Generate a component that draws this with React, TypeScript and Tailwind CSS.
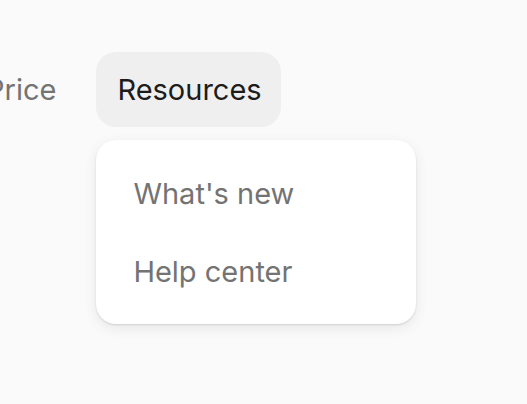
export default function App() {
  const items = ["What's new", 'Help center'];

  return (
    <div
      className="min-h-screen bg-[#fafafa] overflow-hidden"
      style={{ fontFamily: 'Inter, "Noto Sans", sans-serif' }}
    >
      <nav className="flex items-start pt-[52px] -ml-[35px]">
        <button className="h-[75px] px-[21px] pt-[1px] rounded-[20px] text-[29px] text-[#737373]">
          Price
        </button>
        <div className="ml-[19px] flex flex-col">
          <button className="h-[75px] w-[185px] px-[21px] pt-[1px] rounded-[20px] bg-[#efefef] text-[29px] text-[#1c1c1c] text-left">
            Resources
          </button>
          <div className="mt-[13px] w-[320px] py-[14px] rounded-[20px] bg-white shadow-[0_4px_14px_rgba(0,0,0,0.08),0_1px_2px_rgba(0,0,0,0.12)]">
            {items.map((item) => (
              <div
                key={item}
                className="h-[78px] flex items-center px-[37px] pt-[1px] text-[29px] text-[#737373]"
              >
                {item}
              </div>
            ))}
          </div>
        </div>
      </nav>
    </div>
  );
}
